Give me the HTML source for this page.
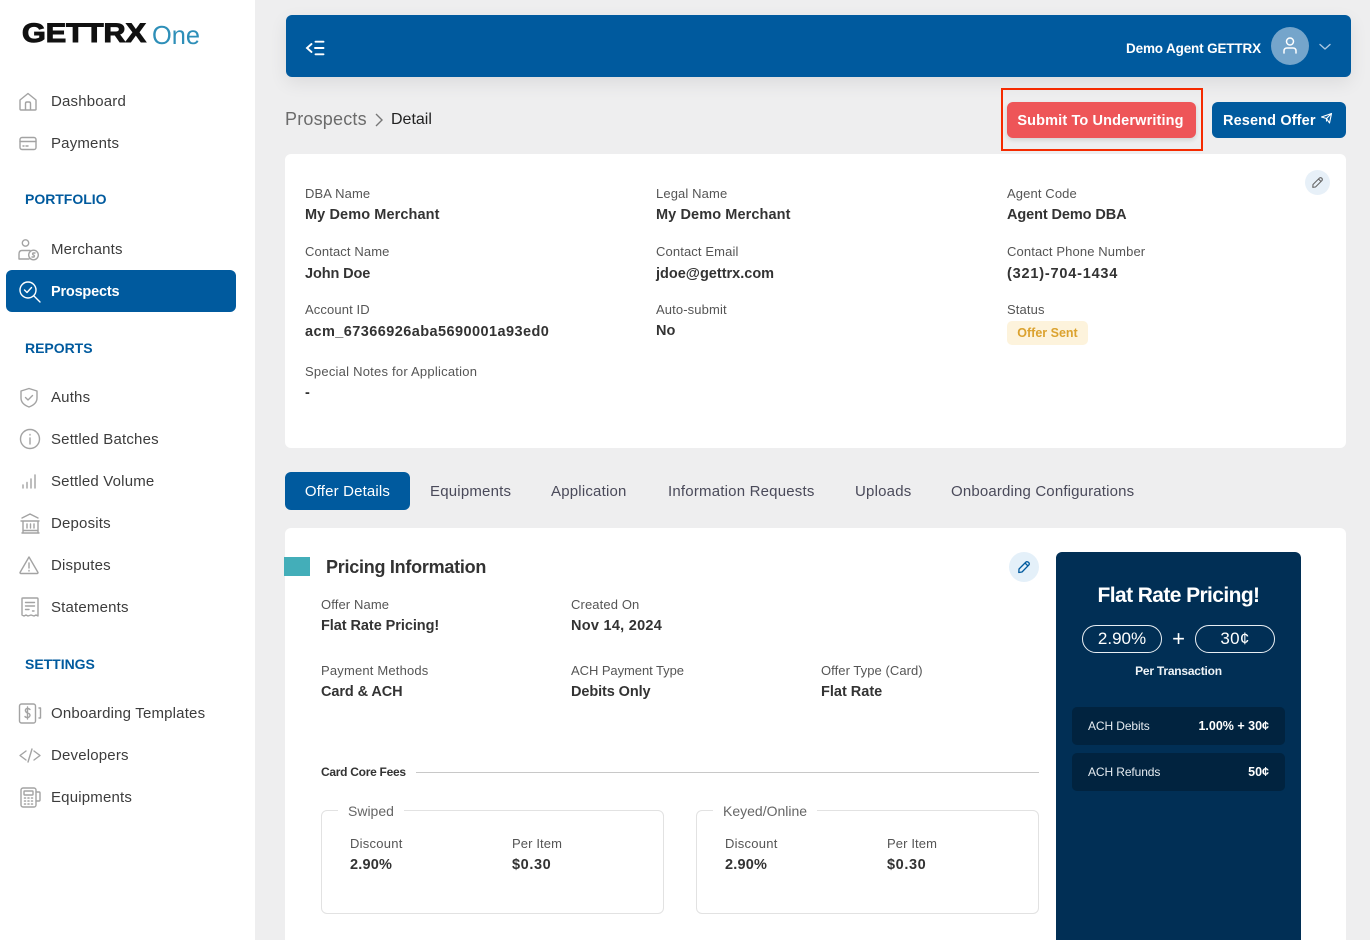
<!DOCTYPE html>
<html><head><meta charset="utf-8"><title>Prospect Detail</title>
<style>
*{box-sizing:border-box}
html,body{margin:0;padding:0}
body{width:1370px;height:940px;overflow:hidden;background:#eeeeef;position:relative;font-family:"Liberation Sans",sans-serif;color:#333}
.a,.t,.l,.b,.n,.h{position:absolute;white-space:nowrap}
.l{font-size:13px;line-height:16px;color:#555;letter-spacing:.12px}
.b{font-size:14.5px;line-height:18px;font-weight:700;color:#333;letter-spacing:0}
.n{left:51px;font-size:15px;line-height:20px;color:#3c3c3c;letter-spacing:.18px}
.h{left:25px;font-size:14px;line-height:18px;font-weight:700;color:#005a9e;letter-spacing:-.02px}
.i{position:absolute;left:17px;width:24px;height:24px;fill:none;stroke:#a3a3a3;stroke-width:1.4;stroke-linecap:round;stroke-linejoin:round}
.tab{position:absolute;top:483px;font-size:15px;line-height:18px;color:#4a4a5a;white-space:nowrap;letter-spacing:.2px}
.fs{position:absolute;top:810px;width:343px;height:104px;border:1px solid #e2e2e2;border-radius:6px}
</style></head><body>

<!-- Sidebar -->
<div class="a" style="left:0;top:0;width:255px;height:940px;background:#fff"></div>
<svg class="a" style="left:18px;top:14px" width="190" height="40" viewBox="0 0 190 40">
<text x="4" y="28" font-family="Liberation Sans" font-weight="700" font-size="27" fill="#111" stroke="#111" stroke-width="1.100" textLength="124" lengthAdjust="spacingAndGlyphs">GETTRX</text>
<text x="134" y="30" font-family="Liberation Sans" font-size="26" fill="#2e8fb8" textLength="48" lengthAdjust="spacingAndGlyphs">One</text>
</svg>

<svg class="i" style="top:89px;left:16px" viewBox="0 0 24 24"><path d="M4 11 12 4.500 20 11V20.500Q20 21 19 21H5Q4 21 4 20V11ZM9.500 21V14.500Q9.500 13 11 13H13Q14.500 13 14.500 14.500V21"/></svg>
<div class="n" style="top:92px">Dashboard</div>
<svg class="i" style="top:132px" viewBox="0 0 24 24"><rect x="3" y="5.500" width="16" height="12" rx="2"/><path d="M3 9.500H19M6 14H7M9 14H11"/></svg>
<div class="n" style="top:134px">Payments</div>

<div class="h" style="top:190px">PORTFOLIO</div>
<svg class="i" style="top:238px;width:24px" viewBox="0 0 24 24"><circle cx="8.500" cy="5" r="3.200"/><path d="M13 12.500H5Q2 12.500 2 16V21H12"/><circle cx="16.500" cy="17" r="4.800"/><path d="M18 15H16Q15 16.500 16.500 17T17 19H15"/></svg>
<div class="n" style="top:240px">Merchants</div>

<div class="a" style="left:6px;top:270px;width:230px;height:42px;background:#005a9e;border-radius:6px"></div>
<svg class="i" style="top:280px;stroke:#fff" viewBox="0 0 24 24"><circle cx="11" cy="10" r="8"/><path d="M7.500 10 10 12.500 14.500 7.500M17 16 23 22"/></svg>
<div class="n" style="top:282px;color:#fff;font-weight:700;font-size:14.5px;letter-spacing:-.2px">Prospects</div>

<div class="h" style="top:339px">REPORTS</div>
<svg class="i" style="top:385px" viewBox="0 0 24 24"><path d="M12 3.500 20 6V13Q20 19 12 22 4 19 4 13V6ZM8.500 12.500 11 15 15.500 10.500"/></svg>
<div class="n" style="top:388px">Auths</div>
<svg class="i" style="top:427px;left:18px" viewBox="0 0 24 24"><circle cx="12" cy="12" r="9.500"/><path d="M12 11V17M12 7.500V8"/></svg>
<div class="n" style="top:430px">Settled Batches</div>
<svg class="i" style="top:469px" viewBox="0 0 24 24"><path d="M6 19V16M10 19V13.500M14 19V10M18 19V6"/></svg>
<div class="n" style="top:472px">Settled Volume</div>
<svg class="i" style="top:511px;left:18px" viewBox="0 0 24 24"><path d="M4 7 12 3 20 7M3 10H21M4 22H21M5 19.500H20M5 10V22M20 10V22M9 13V17M12.500 13V17M16 13V17"/></svg>
<div class="n" style="top:514px">Deposits</div>
<svg class="i" style="top:553px" viewBox="0 0 24 24"><path d="M12 4 21 19.500Q21 20.500 20 20.500H4Q3 20.500 3 19.500ZM12 10V15M12 17.500V18"/></svg>
<div class="n" style="top:556px">Disputes</div>
<svg class="i" style="top:595px" viewBox="0 0 24 24"><path d="M5 3.500Q5 3 6 3H20Q21 3 21 4V21L19 20 17 21 14 20 11 21 9 20 7 21 5 20ZM8.500 7.500H17.500M8.500 11H17.500M8.500 14.500H12M15.500 16H17"/></svg>
<div class="n" style="top:598px">Statements</div>

<div class="h" style="top:655px">SETTINGS</div>
<svg class="i" style="top:701px;width:26px" viewBox="0 0 26 24"><rect x="2.500" y="3" width="16" height="19" rx="2"/><path d="M22 7H23.500V17H22M13 8.500Q12 7.500 10.500 7.500 8 7.500 8.500 10 9 11.500 10.500 12 13 12.500 13 14.500 12.500 16.500 10.500 16.500 8.500 16.500 8 15.500M10.500 6V18"/></svg>
<div class="n" style="top:704px">Onboarding Templates</div>
<svg class="i" style="top:743px;left:18px" viewBox="0 0 24 24"><path d="M8 8 2 12.500 8 17M16 8 22 12.500 16 17M14 6 10 19"/></svg>
<div class="n" style="top:746px">Developers</div>
<svg class="i" style="top:785px;left:18px" viewBox="0 0 24 24"><rect x="3" y="3" width="15" height="19" rx="2"/><path d="M18 7H21Q22 7 22 8V15Q22 16 21 16H18"/><rect x="6" y="6" width="9" height="4" rx=".5"/><path d="M6.500 13H7.500M10 13H11M13.500 13H14.500M6.500 16H7.500M10 16H11M13.500 16H14.500M6.500 19H7.500M10 19H11M13.500 19H14.500" stroke-width="1.600"/></svg>
<div class="n" style="top:788px">Equipments</div>

<!-- Topbar -->
<div class="a" style="left:286px;top:15px;width:1065px;height:62px;background:#005a9e;border-radius:6px;box-shadow:0 6px 18px rgba(0,0,0,.08)"></div>
<svg class="a" style="left:304px;top:38px" width="22" height="20" viewBox="0 0 22 20" fill="none" stroke="#fff" stroke-width="1.900" stroke-linecap="round"><path d="M7.500 6 3 10 7.500 14M11.500 3.700H19.500M11 10H19.500M11.500 16.300H19.500"/></svg>
<div class="a" style="left:1126px;top:40px;font-size:13.5px;line-height:18px;color:#fff;font-weight:700;letter-spacing:-.15px;white-space:nowrap">Demo Agent GETTRX</div>
<div class="a" style="left:1271px;top:27px;width:38px;height:38px;border-radius:50%;background:#75a5cb"></div>
<svg class="a" style="left:1279px;top:35px" width="22" height="22" viewBox="0 0 22 22" fill="none" stroke="#fff" stroke-width="1.500" stroke-linecap="round"><circle cx="11" cy="6.500" r="3.500"/><path d="M5 18V16Q5 13 8 13H14Q17 13 17 16V18"/></svg>
<svg class="a" style="left:1317px;top:41px" width="16" height="12" viewBox="0 0 16 12" fill="none" stroke="#a9c6e0" stroke-width="1.400" stroke-linecap="round" stroke-linejoin="round"><path d="M3 3.500 8 8 13 3.500"/></svg>

<!-- Breadcrumb -->
<div class="a" style="left:285px;top:107px;font-size:18px;line-height:24px;color:#6b6b6b;white-space:nowrap;letter-spacing:.2px">Prospects</div>
<svg class="a" style="left:372px;top:111px" width="14" height="18" viewBox="0 0 14 18" fill="none" stroke="#777" stroke-width="1.400"><path d="M4 3 10 9 4 15"/></svg>
<div class="a" style="left:391px;top:109px;font-size:16px;line-height:22px;color:#222;white-space:nowrap">Detail</div>

<!-- Buttons -->
<div class="a" style="left:1001px;top:88px;width:202px;height:63px;border:2px solid #f52a00"></div>
<div class="a" style="left:1007px;top:102px;width:189px;height:36px;background:#ee5558;border-radius:6px;box-shadow:0 2px 5px rgba(0,0,0,.12);color:#fff;font-size:14.5px;font-weight:700;line-height:38px;padding-right:2px;text-align:center;white-space:nowrap;letter-spacing:.14px">Submit To Underwriting</div>
<div class="a" style="left:1212px;top:102px;width:134px;height:36px;background:#005a9e;border-radius:6px;color:#fff;font-size:14.5px;font-weight:700;line-height:38px;padding-left:11px;white-space:nowrap;letter-spacing:.13px">Resend Offer</div>
<svg class="a" style="left:1320px;top:112px" width="13" height="13" viewBox="0 0 13 13" fill="none" stroke="#fff" stroke-width="1.100" stroke-linejoin="round"><path d="M1.500 5 11.500 1.500 9.500 11 6.500 6.500ZM6.500 6.500 11.500 1.500M6.500 6.500 6.500 9.500"/></svg>

<!-- Info card -->
<div class="a" style="left:285px;top:154px;width:1061px;height:294px;background:#fff;border-radius:6px"></div>
<div class="a" style="left:1305px;top:170px;width:25px;height:25px;border-radius:50%;background:#e7f0f8"></div>
<svg class="a" style="left:1311px;top:176px" width="13" height="13" viewBox="0 0 13 13" fill="none" stroke="#666" stroke-width="1.100" stroke-linejoin="round"><path d="M2 8.500 8.500 2Q9.500 1.200 10.800 2.200 11.800 3.500 11 4.500L4.500 11 1.800 11.300ZM7.500 3 10 5.500"/></svg>

<div class="l" style="left:305px;top:186px">DBA Name</div><div class="b" style="left:305px;top:206px;letter-spacing:.1px">My Demo Merchant</div>
<div class="l" style="left:656px;top:186px">Legal Name</div><div class="b" style="left:656px;top:206px;letter-spacing:.1px">My Demo Merchant</div>
<div class="l" style="left:1007px;top:186px">Agent Code</div><div class="b" style="left:1007px;top:206px;letter-spacing:-.1px">Agent Demo DBA</div>
<div class="l" style="left:305px;top:244px">Contact Name</div><div class="b" style="left:305px;top:265px;letter-spacing:-.1px">John Doe</div>
<div class="l" style="left:656px;top:244px">Contact Email</div><div class="b" style="left:656px;top:265px">jdoe@gettrx.com</div>
<div class="l" style="left:1007px;top:244px">Contact Phone Number</div><div class="b" style="left:1007px;top:265px;letter-spacing:.8px">(321)-704-1434</div>
<div class="l" style="left:305px;top:302px">Account ID</div><div class="b" style="left:305px;top:323px;letter-spacing:.43px">acm_67366926aba5690001a93ed0</div>
<div class="l" style="left:656px;top:302px">Auto-submit</div><div class="b" style="left:656px;top:322px">No</div>
<div class="l" style="left:1007px;top:302px">Status</div>
<div class="a" style="left:1007px;top:321px;width:81px;height:24px;background:#fdf3dc;border-radius:5px;color:#dba22f;font-size:12.5px;font-weight:700;line-height:24px;text-align:center;white-space:nowrap">Offer Sent</div>
<div class="l" style="left:305px;top:364px;letter-spacing:.23px">Special Notes for Application</div><div class="b" style="left:305px;top:384px">-</div>

<!-- Tabs -->
<div class="a" style="left:285px;top:472px;width:125px;height:38px;background:#005a9e;border-radius:6px;color:#fff;font-size:15px;font-weight:400;line-height:40px;text-align:center;white-space:nowrap;letter-spacing:.16px">Offer Details</div>
<div class="tab" style="left:430px">Equipments</div>
<div class="tab" style="left:551px">Application</div>
<div class="tab" style="left:668px">Information Requests</div>
<div class="tab" style="left:855px">Uploads</div>
<div class="tab" style="left:951px;letter-spacing:.16px">Onboarding Configurations</div>

<!-- Pricing card -->
<div class="a" style="left:285px;top:528px;width:1061px;height:412px;background:#fff;border-radius:6px 6px 0 0"></div>
<div class="a" style="left:284px;top:557px;width:26px;height:19px;background:#43aeb9"></div>
<div class="a" style="left:326px;top:556px;font-size:18px;line-height:22px;font-weight:700;color:#333;white-space:nowrap;letter-spacing:-.26px">Pricing Information</div>
<div class="a" style="left:1009px;top:552px;width:30px;height:30px;border-radius:50%;background:#e4f0f9"></div>
<svg class="a" style="left:1017px;top:560px" width="14" height="14" viewBox="0 0 14 14" fill="none" stroke="#005a9e" stroke-width="1.300" stroke-linejoin="round"><path d="M2 9 9 2Q10 1.200 11.500 2.300 12.800 3.500 12 4.800L5 12 1.800 12.500ZM8 3 11 6"/></svg>

<div class="l" style="left:321px;top:597px">Offer Name</div><div class="b" style="left:321px;top:617px;letter-spacing:-.06px">Flat Rate Pricing!</div>
<div class="l" style="left:571px;top:597px">Created On</div><div class="b" style="left:571px;top:617px;letter-spacing:.27px">Nov 14, 2024</div>
<div class="l" style="left:321px;top:663px;letter-spacing:.18px">Payment Methods</div><div class="b" style="left:321px;top:683px;letter-spacing:-.1px">Card &amp; ACH</div>
<div class="l" style="left:571px;top:663px;letter-spacing:-.06px">ACH Payment Type</div><div class="b" style="left:571px;top:683px;letter-spacing:-.1px">Debits Only</div>
<div class="l" style="left:821px;top:663px;letter-spacing:.06px">Offer Type (Card)</div><div class="b" style="left:821px;top:683px">Flat Rate</div>

<div class="a" style="left:321px;top:764px;font-size:12px;line-height:16px;font-weight:700;color:#333;white-space:nowrap;letter-spacing:-.28px">Card Core Fees</div>
<div class="a" style="left:416px;top:772px;width:623px;height:1px;background:#c8c8c8"></div>

<div class="fs" style="left:321px"></div>
<div class="a" style="left:338px;top:803px;padding:0 10px;background:#fff;font-size:14px;line-height:17px;color:#666;white-space:nowrap">Swiped</div>
<div class="l" style="left:350px;top:836px;letter-spacing:.25px">Discount</div><div class="b" style="left:350px;top:856px;letter-spacing:.2px">2.90%</div>
<div class="l" style="left:512px;top:836px">Per Item</div><div class="b" style="left:512px;top:856px;letter-spacing:.6px">$0.30</div>

<div class="fs" style="left:696px"></div>
<div class="a" style="left:713px;top:803px;padding:0 10px;background:#fff;font-size:14px;line-height:17px;color:#666;white-space:nowrap">Keyed/Online</div>
<div class="l" style="left:725px;top:836px;letter-spacing:.25px">Discount</div><div class="b" style="left:725px;top:856px;letter-spacing:.2px">2.90%</div>
<div class="l" style="left:887px;top:836px">Per Item</div><div class="b" style="left:887px;top:856px;letter-spacing:.6px">$0.30</div>

<!-- Navy panel -->
<div class="a" style="left:1056px;top:552px;width:245px;height:388px;background:#012f55;border-radius:6px 6px 0 0"></div>
<div class="a" style="left:1056px;top:582px;width:245px;text-align:center;font-size:21px;line-height:28px;font-weight:700;color:#fff;white-space:nowrap;letter-spacing:-.6px">Flat Rate Pricing!</div>
<div class="a" style="left:1082px;top:625px;width:80px;height:28px;border:1px solid #e8eef3;border-radius:14px;color:#fff;font-size:17px;line-height:26px;text-align:center">2.90%</div>
<div class="a" style="left:1170px;top:624px;width:17px;text-align:center;color:#fff;font-size:22px;line-height:30px">+</div>
<div class="a" style="left:1195px;top:625px;width:80px;height:28px;border:1px solid #e8eef3;border-radius:14px;color:#fff;font-size:17px;line-height:26px;text-align:center;letter-spacing:.3px">30¢</div>
<div class="a" style="left:1056px;top:663px;width:245px;text-align:center;font-size:12px;line-height:16px;font-weight:700;color:#eef3f7;white-space:nowrap;letter-spacing:-.22px">Per Transaction</div>

<div class="a" style="left:1072px;top:707px;width:213px;height:38px;background:#01233f;border-radius:5px"></div>
<div class="a" style="left:1088px;top:718px;font-size:12px;line-height:16px;color:#e6ecf1;white-space:nowrap;letter-spacing:-.1px">ACH Debits</div>
<div class="a" style="left:1150px;width:119px;text-align:right;top:718px;font-size:12.5px;line-height:16px;font-weight:700;color:#fff;white-space:nowrap">1.00% + 30¢</div>
<div class="a" style="left:1072px;top:753px;width:213px;height:38px;background:#01233f;border-radius:5px"></div>
<div class="a" style="left:1088px;top:764px;font-size:12px;line-height:16px;color:#e6ecf1;white-space:nowrap;letter-spacing:-.1px">ACH Refunds</div>
<div class="a" style="left:1150px;width:119px;text-align:right;top:764px;font-size:12.5px;line-height:16px;font-weight:700;color:#fff;white-space:nowrap">50¢</div>

</body></html>
